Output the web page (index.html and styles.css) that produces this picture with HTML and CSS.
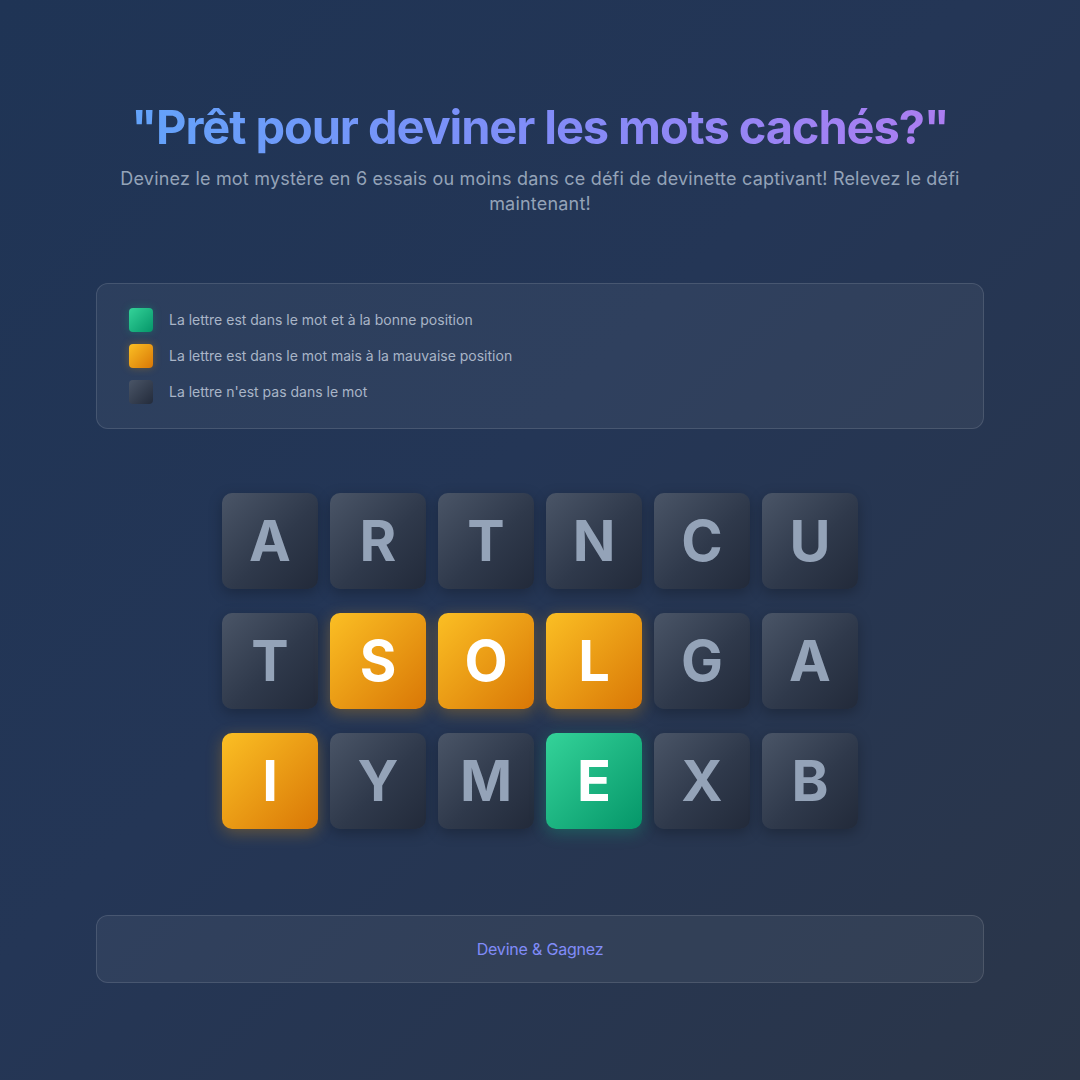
FILE: index.html
```html
<!DOCTYPE html>
<html lang="fr">
<head>
<meta charset="utf-8">
<link rel="stylesheet" href="styles.css">
</head>
<body>
<main class="page">
  <header class="hero">
    <h1 class="title">"Prêt pour deviner les mots cachés?"</h1>
    <p class="subtitle">Devinez le mot mystère en 6 essais ou moins dans ce défi de devinette captivant! Relevez le défi maintenant!</p>
  </header>

  <section class="legend">
    <div class="legend-row"><span class="swatch correct"></span><span>La lettre est dans le mot et à la bonne position</span></div>
    <div class="legend-row"><span class="swatch present"></span><span>La lettre est dans le mot mais à la mauvaise position</span></div>
    <div class="legend-row"><span class="swatch absent"></span><span>La lettre n'est pas dans le mot</span></div>
  </section>

  <section class="board">
    <div class="tile absent">A</div>
    <div class="tile absent">R</div>
    <div class="tile absent">T</div>
    <div class="tile absent">N</div>
    <div class="tile absent">C</div>
    <div class="tile absent">U</div>
    <div class="tile absent">T</div>
    <div class="tile present">S</div>
    <div class="tile present">O</div>
    <div class="tile present">L</div>
    <div class="tile absent">G</div>
    <div class="tile absent">A</div>
    <div class="tile present">I</div>
    <div class="tile absent">Y</div>
    <div class="tile absent">M</div>
    <div class="tile correct">E</div>
    <div class="tile absent">X</div>
    <div class="tile absent">B</div>
  </section>

  <footer class="footer">Devine &amp; Gagnez</footer>
</main>
</body>
</html>
```

FILE: styles.css
```css
* { box-sizing: border-box; }
html, body { margin: 0; padding: 0; }
body {
  min-height: 1080px;
  font-family: Inter, "Noto Sans", sans-serif;
  background: linear-gradient(135deg, #1f3455 0%, #243656 45%, #2b3649 100%);
  color: #cbd5e1;
}
.page {
  width: 888px;
  margin: 0 auto;
  padding-top: 98px;
}
.hero { text-align: center; }
.title {
  margin: 0;
  font-size: 47px;
  line-height: 58px;
  font-weight: 700;
  letter-spacing: -1.1px;
  background: linear-gradient(90deg, #60a5fa 0%, #818cf8 50%, #b07cf0 100%);
  -webkit-background-clip: text;
  background-clip: text;
  color: transparent;
}
.subtitle {
  margin: 10px 0 0;
  font-size: 18px;
  line-height: 25px;
  letter-spacing: 0.2px;
  color: #94a3b8;
}
.legend {
  margin-top: 67px;
  border: 1px solid rgba(255,255,255,0.12);
  border-radius: 12px;
  background: rgba(255,255,255,0.05);
  padding: 24px 32px;
  display: flex;
  flex-direction: column;
  gap: 12px;
}
.legend-row {
  display: flex;
  align-items: center;
  gap: 16px;
  font-size: 14px;
  line-height: 24px;
  color: #a9b5c7;
}
.swatch {
  width: 24px;
  height: 24px;
  border-radius: 4px;
  flex: none;
}
.correct { background: linear-gradient(135deg, #34d399, #059669); }
.present { background: linear-gradient(135deg, #fbbf24, #d97706); }
.absent { background: linear-gradient(135deg, #4b5563, #1f2937); }
.swatch.correct { box-shadow: 0 0 8px rgba(16,185,129,0.3); }
.swatch.present { box-shadow: 0 0 8px rgba(245,158,11,0.3); }
.swatch.absent { background: linear-gradient(135deg, #4a5567, #232b3b); }

.board {
  margin: 64px auto 0;
  width: 636px;
  display: grid;
  grid-template-columns: repeat(6, 96px);
  grid-auto-rows: 96px;
  column-gap: 12px;
  row-gap: 24px;
}
.tile {
  display: flex;
  align-items: center;
  justify-content: center;
  border-radius: 10px;
  font-size: 56px;
  font-weight: 700;
  color: #fff;
}
.tile.absent {
  background: linear-gradient(135deg, #4a5567 0%, #2f394b 55%, #222a3a 100%);
  color: #94a3b8;
  box-shadow: 0 4px 14px rgba(0,0,0,0.25);
}
.tile.present { box-shadow: 0 4px 16px rgba(245,158,11,0.3); }
.tile.correct { box-shadow: 0 4px 16px rgba(16,185,129,0.3); }

.footer {
  margin-top: 86px;
  height: 68px;
  display: flex;
  align-items: center;
  justify-content: center;
  border: 1px solid rgba(255,255,255,0.12);
  border-radius: 12px;
  background: rgba(255,255,255,0.05);
  font-size: 16px;
  letter-spacing: -0.2px;
  color: #818cf8;
}
```
